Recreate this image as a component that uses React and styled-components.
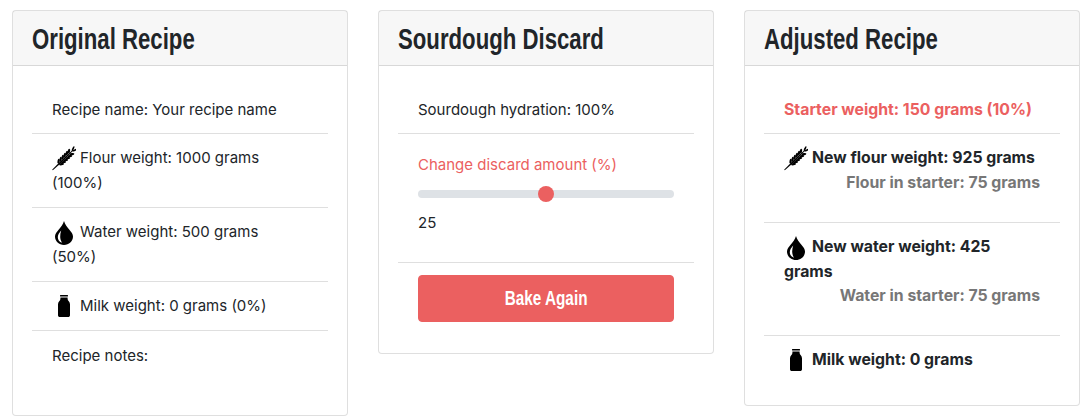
import React from 'react';
import styled, { createGlobalStyle } from 'styled-components';

const GlobalStyle = createGlobalStyle`
  * {
    box-sizing: border-box;
  }
  body {
    margin: 0;
    background-color: #fff;
    color: #212529;
    font-family: Inter, 'Liberation Sans', sans-serif;
    font-size: 15px;
    line-height: 24px;
  }
`;

const Page = styled.div`
  display: grid;
  grid-template-columns: repeat(3, 336px);
  column-gap: 30px;
  align-items: start;
  padding: 10px 12px 0;
`;

const Card = styled.section`
  background-color: #fff;
  border: 1px solid rgba(0, 0, 0, 0.125);
  border-radius: 4px;
`;

const CardHeader = styled.h2`
  margin: 0;
  height: 55px;
  padding: 2px 19px 0;
  background-color: rgba(0, 0, 0, 0.03);
  border-bottom: 1px solid rgba(0, 0, 0, 0.125);
  font-family: 'Liberation Sans', sans-serif;
  font-size: 29px;
  font-weight: 700;
  line-height: 52px;
  white-space: nowrap;
`;

// the original heading face is condensed, none is installed
const Condensed = styled.span`
  display: inline-block;
  transform: scaleX(0.765);
  transform-origin: ${(props) => props.$origin || 'left'} center;
`;

const CardBody = styled.div`
  padding: 19px 19px ${(props) => props.$bottom || 20}px;
`;

const Row = styled.div`
  padding: 13px 20px 11px;
  border-bottom: ${(props) => (props.$last ? 'none' : '1px solid rgba(0, 0, 0, 0.125)')};
  font-size: ${(props) => (props.$bold ? '15.8px' : '15px')};
  font-weight: ${(props) => (props.$bold ? 700 : 400)};
  color: ${(props) => (props.$red ? '#eb6060' : '#212529')};
`;

const IngredientRow = styled(Row)`
  padding: 12px 25px 12px 20px;
`;

const IconSlot = styled.span`
  display: inline-flex;
  justify-content: center;
  align-items: center;
  width: 24px;
  height: ${(props) => props.$height || 24}px;
  margin-right: 4px;
  vertical-align: ${(props) => props.$drop || -8.4}px;
`;

const SubLine = styled.div`
  margin: 0 -5px 15px 0;
  text-align: right;
  color: #777;
`;

const Notes = styled.div`
  margin-bottom: 16px;
`;

const DiscardLabel = styled.label`
  display: block;
  margin-top: 6px;
  color: #eb6060;
`;

const DiscardRange = styled.input`
  display: block;
  width: 100%;
  height: 16px;
  margin: 9px 0;
  padding: 0;
  background: transparent;
  appearance: none;

  &::-webkit-slider-runnable-track {
    height: 8px;
    background-color: #dee2e6;
    border-radius: 16px;
  }
  &::-webkit-slider-thumb {
    appearance: none;
    width: 16px;
    height: 16px;
    margin-top: -4px;
    background-color: #eb6060;
    border: none;
    border-radius: 50%;
  }
`;

const DiscardValue = styled.div`
  margin-bottom: 16px;
`;

const BakeButton = styled.button`
  display: block;
  width: 100%;
  height: 47px;
  margin-top: -1px;
  padding: 0;
  background-color: #eb6060;
  border: 1px solid #eb6060;
  border-radius: 4px;
  color: #fff;
  font-family: 'Liberation Sans', sans-serif;
  font-size: 20px;
  font-weight: 700;
`;

const grainOffsets = [10, 13, 16, 19, 22, 25];

const Wheat = () => (
  <IconSlot>
    <svg width="25" height="25" viewBox="0 0 25 25" fill="#000">
      <g transform="translate(0.5 24.5) rotate(-44)">
        <path d="M0 -0.5 L12 -0.9 L30 -0.5 L30 0.5 L12 0.9 L0 0.5 Z" />
        {grainOffsets.map((x) => (
          <g key={x}>
            <ellipse cx={x + 1} cy="-2.2" rx="2.6" ry="1.2" transform={`rotate(-36 ${x + 1} -2.2)`} />
            <ellipse cx={x + 1} cy="2.2" rx="2.6" ry="1.2" transform={`rotate(36 ${x + 1} 2.2)`} />
          </g>
        ))}
        <ellipse cx="31" cy="-1.2" rx="2.6" ry="0.9" transform="rotate(-20 31 -1.2)" />
        <ellipse cx="31" cy="1.2" rx="2.6" ry="0.9" transform="rotate(20 31 1.2)" />
      </g>
    </svg>
  </IconSlot>
);

const Drop = () => (
  <IconSlot>
    <svg width="18" height="24" viewBox="0 0 18 24">
      <path
        fill="#000"
        d="M9 0c1 3.6 3.2 6.1 5.4 8.8C16.3 11.1 18 13 18 15.6 18 20.3 14 24 9 24S0 20.3 0 15.6c0-2.6 1.7-4.5 3.6-6.8C5.8 6.1 8 3.6 9 0z"
      />
      <path
        fill="#fff"
        d="M6.2 9.6c-2 2.4-3.4 4.2-3.4 6.6 0 2.6 1.6 4.7 4.2 5.5-1.1-1.6-1.7-3.4-1.8-5.6-.1-2.2.3-4.4 1-6.5z"
      />
    </svg>
  </IconSlot>
);

const Milk = () => (
  <IconSlot $height={22} $drop={-6}>
    <svg width="12" height="22" viewBox="0 0 12 22" fill="#000">
      <rect x="2" y="0" width="8" height="1.5" rx="0.5" />
      <path d="M2.4 2.5h7.2v1.5c0 1.6 2.4 2.7 2.4 5.2v11c0 1-.8 1.8-1.8 1.8H1.8C.8 22 0 21.2 0 20.2v-11C0 6.7 2.4 5.6 2.4 4z" />
    </svg>
  </IconSlot>
);

const App = () => (
  <Page>
    <GlobalStyle />
    <Card>
      <CardHeader>
        <Condensed>Original Recipe</Condensed>
      </CardHeader>
      <CardBody>
        <Row>Recipe name: Your recipe name</Row>
        <IngredientRow>
          <Wheat />
          Flour weight: 1000 grams (100%)
        </IngredientRow>
        <IngredientRow>
          <Drop />
          Water weight: 500 grams (50%)
        </IngredientRow>
        <IngredientRow>
          <Milk />
          Milk weight: 0 grams (0%)
        </IngredientRow>
        <Row $last>
          <Notes>Recipe notes:</Notes>
        </Row>
      </CardBody>
    </Card>

    <Card>
      <CardHeader>
        <Condensed>Sourdough Discard</Condensed>
      </CardHeader>
      <CardBody>
        <Row>Sourdough hydration: 100%</Row>
        <Row>
          <DiscardLabel htmlFor="discard">Change discard amount (%)</DiscardLabel>
          <DiscardRange id="discard" type="range" min="0" max="50" defaultValue="25" />
          <DiscardValue>25</DiscardValue>
        </Row>
        <Row $last>
          <BakeButton type="button">
            <Condensed $origin="center">Bake Again</Condensed>
          </BakeButton>
        </Row>
      </CardBody>
    </Card>

    <Card>
      <CardHeader>
        <Condensed>Adjusted Recipe</Condensed>
      </CardHeader>
      <CardBody $bottom={21}>
        <Row $red $bold>Starter weight: 150 grams (10%)</Row>
        <IngredientRow $bold>
          <Wheat />
          New flour weight: 925 grams
          <SubLine>Flour in starter: 75 grams</SubLine>
        </IngredientRow>
        <IngredientRow $bold>
          <Drop />
          New water weight: 425 grams
          <SubLine>Water in starter: 75 grams</SubLine>
        </IngredientRow>
        <IngredientRow $bold $last>
          <Milk />
          Milk weight: 0 grams
        </IngredientRow>
      </CardBody>
    </Card>
  </Page>
);

export default App;
